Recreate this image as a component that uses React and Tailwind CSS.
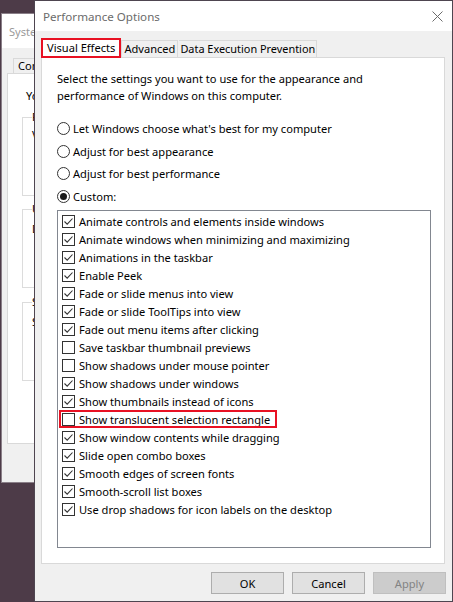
import React from "react";

const items = [
  ["Animate controls and elements inside windows", true],
  ["Animate windows when minimizing and maximizing", true],
  ["Animations in the taskbar", true],
  ["Enable Peek", true],
  ["Fade or slide menus into view", true],
  ["Fade or slide ToolTips into view", true],
  ["Fade out menu items after clicking", true],
  ["Save taskbar thumbnail previews", false],
  ["Show shadows under mouse pointer", false],
  ["Show shadows under windows", true],
  ["Show thumbnails instead of icons", true],
  ["Show translucent selection rectangle", false, true],
  ["Show window contents while dragging", true],
  ["Slide open combo boxes", true],
  ["Smooth edges of screen fonts", true],
  ["Smooth-scroll list boxes", true],
  ["Use drop shadows for icon labels on the desktop", true],
];

function Check({ checked }) {
  return (
    <span className="w-[13px] h-[13px] border border-[#333333] bg-white shrink-0 flex items-center justify-center">
      {checked && (
        <svg width="11" height="11" viewBox="0 0 11 11">
          <path d="M1.5 5.5 L4.2 8.2 L9.5 2.5" fill="none" stroke="#333333" strokeWidth="1.1" />
        </svg>
      )}
    </span>
  );
}

function Radio({ checked }) {
  return (
    <span className="w-[13px] h-[13px] rounded-full border border-[#333333] bg-white shrink-0 flex items-center justify-center">
      {checked && <span className="w-[7px] h-[7px] rounded-full bg-[#1a1a1a]" />}
    </span>
  );
}

const font = { fontFamily: '"Segoe UI", "Noto Sans", "Open Sans", sans-serif' };

export default function App() {
  return (
    <div className="relative w-[453px] h-[602px] overflow-hidden bg-[#4d3b48] text-[11.1px] leading-[15px] text-black" style={font}>
      {/* background window (only its left edge shows) */}
      <div className="absolute left-[1px] top-[13px] w-[80px] h-[470px] bg-[#f0f0f0] border border-r-0 border-[#8a7f88] flex flex-col">
        <div className="h-[34px] bg-white flex items-center pl-[7px] text-[#9a9a9a] whitespace-nowrap">Syste</div>
        <div className="flex-1 flex flex-col pl-[5px] pt-[10px]">
          <div className="flex h-[15px]">
            <div className="pl-[4px] ml-[6px] border border-b-0 border-r-0 border-[#d9d9d9] leading-[14px] flex-1">Com</div>
          </div>
          <div className="h-[371px] bg-white border border-r-0 border-[#d9d9d9] pl-[14px] pt-[14px] flex flex-col">
            <div className="pl-[4px]">Yo</div>
            <div className="mt-[14px] h-[79px] border border-r-0 border-[#dcdcdc] relative">
              <span className="absolute left-[9px] -top-[9px] bg-white">P</span>
              <div className="pl-[9px] pt-[9px]">V</div>
            </div>
            <div className="mt-[13px] h-[79px] border border-r-0 border-[#dcdcdc] relative">
              <span className="absolute left-[9px] -top-[9px] bg-white">U</span>
              <div className="pl-[9px] pt-[11px]">D</div>
            </div>
            <div className="mt-[14px] h-[79px] border border-r-0 border-[#dcdcdc] relative">
              <span className="absolute left-[9px] -top-[9px] bg-white">S</span>
              <div className="pl-[9px] pt-[11px]">S</div>
            </div>
          </div>
        </div>
      </div>

      {/* front window */}
      <div className="absolute left-[34px] top-0 w-[419px] h-[602px] bg-[#f0f0f0] border border-[#4e4550] flex flex-col">
        <div className="h-[30px] bg-white flex items-center justify-between pl-[8px] pr-[9px] shrink-0">
          <span className="text-[#6b6b6b] text-[11.6px]">Performance Options</span>
          <svg width="11" height="11" viewBox="0 0 11 11">
            <path d="M0.5 0.5 L10.5 10.5 M10.5 0.5 L0.5 10.5" stroke="#6b6b6b" strokeWidth="1" />
          </svg>
        </div>
        <div className="flex flex-col pl-[6px] pt-[7px]">
          <div className="flex items-end h-[19px]">
            <div className="relative z-10 h-[20px] -mb-px bg-white border-2 border-[#e81123] px-[4px] leading-[16px]">Visual Effects</div>
            <div className="h-[17px] border border-b-0 border-[#d9d9d9] px-[2px] leading-[15px]">Advanced</div>
            <div className="h-[17px] border border-b-0 border-l-0 border-[#d9d9d9] ml-px px-[1px] leading-[15px] text-[10.9px]">Data Execution Prevention</div>
          </div>
          <div className="w-[404px] h-[507px] bg-white border border-[#d9d9d9] pl-[15px] pt-[12px] flex flex-col">
            <div className="leading-[17px]">
              Select the settings you want to use for the appearance and
              <br />
              performance of Windows on this computer.
            </div>
            <div className="mt-[13px] flex flex-col">
              <div className="h-[22px] flex items-center gap-[3px]"><Radio /><span>Let Windows choose what's best for my computer</span></div>
              <div className="h-[22px] mt-px flex items-center gap-[3px]"><Radio /><span>Adjust for best appearance</span></div>
              <div className="h-[22px] flex items-center gap-[3px]"><Radio /><span>Adjust for best performance</span></div>
              <div className="h-[22px] mt-px flex items-center gap-[3px]"><Radio checked /><span>Custom:</span></div>
            </div>
            <div className="mt-[3px] w-[374px] h-[338px] border border-[#828790] flex flex-col pl-[4px] pt-px">
              {items.map(([label, checked, hl]) => (
                <div key={label} className="h-[18px] flex items-center gap-[4px] relative">
                  <Check checked={checked} />
                  <span className="whitespace-nowrap">{label}</span>
                  {hl && <span className="absolute left-[-3px] top-0 w-[218px] h-[18px] border-2 border-[#e81123]" />}
                </div>
              ))}
            </div>
          </div>
          <div className="flex justify-end gap-[8px] pr-[6px] mt-[8px]">
            <button className="w-[73px] h-[22px] bg-[#e1e1e1] border border-[#adadad]">OK</button>
            <button className="w-[73px] h-[22px] bg-[#e1e1e1] border border-[#adadad]">Cancel</button>
            <button className="w-[73px] h-[22px] bg-[#cccccc] border border-[#bfbfbf] text-[#838383]">Apply</button>
          </div>
        </div>
      </div>
    </div>
  );
}
